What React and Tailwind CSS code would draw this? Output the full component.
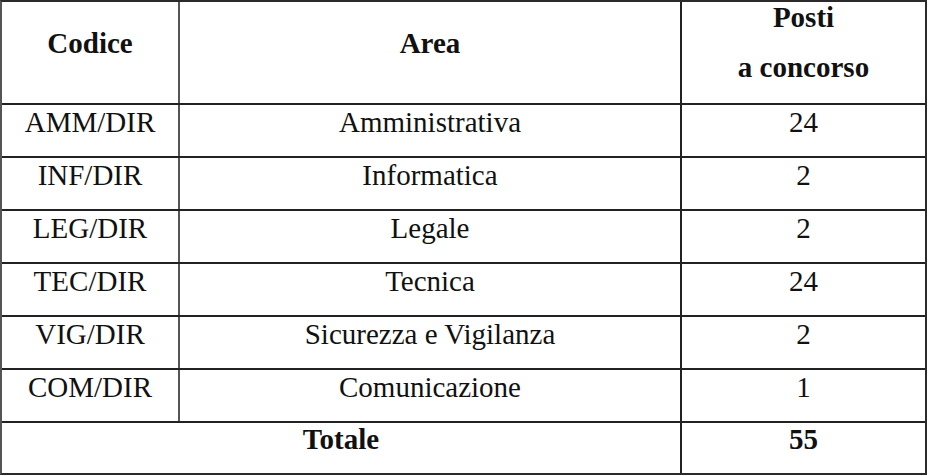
import React from "react";

const rows = [
  { code: "AMM/DIR", area: "Amministrativa", posti: "24" },
  { code: "INF/DIR", area: "Informatica", posti: "2" },
  { code: "LEG/DIR", area: "Legale", posti: "2" },
  { code: "TEC/DIR", area: "Tecnica", posti: "24" },
  { code: "VIG/DIR", area: "Sicurezza e Vigilanza", posti: "2" },
  { code: "COM/DIR", area: "Comunicazione", posti: "1" },
];

export default function App() {
  return (
    <div className="bg-white w-[928px] h-[476px] text-[#111] text-[29px] leading-[30px] font-['Liberation_Serif',serif]">
      <div className="w-[927px] border-2 border-[#2a2a2a] border-l-[#555]">
        {/* header */}
        <div className="flex h-[103px] border-b-2 border-[#222] font-bold">
          <div className="w-[178px] border-r-2 border-[#555] text-center pt-[26px]">Codice</div>
          <div className="w-[502px] border-r-2 border-[#222] text-center pt-[26px]">Area</div>
          <div className="flex-1 text-center">
            <div>Posti</div>
            <div className="mt-[20px]">a concorso</div>
          </div>
        </div>

        {rows.map((row) => (
          <div key={row.code} className="flex h-[53px] border-b-2 border-[#222]">
            <div className="w-[178px] border-r-2 border-[#555] text-center pt-[2px]">{row.code}</div>
            <div className="w-[502px] border-r-2 border-[#222] text-center pt-[2px]">{row.area}</div>
            <div className="flex-1 text-center pt-[2px]">{row.posti}</div>
          </div>
        ))}

        {/* totale */}
        <div className="flex h-[50px] font-bold">
          <div className="w-[680px] border-r-2 border-[#222] text-center pt-[1px]">Totale</div>
          <div className="flex-1 text-center pt-[1px]">55</div>
        </div>
      </div>
    </div>
  );
}
